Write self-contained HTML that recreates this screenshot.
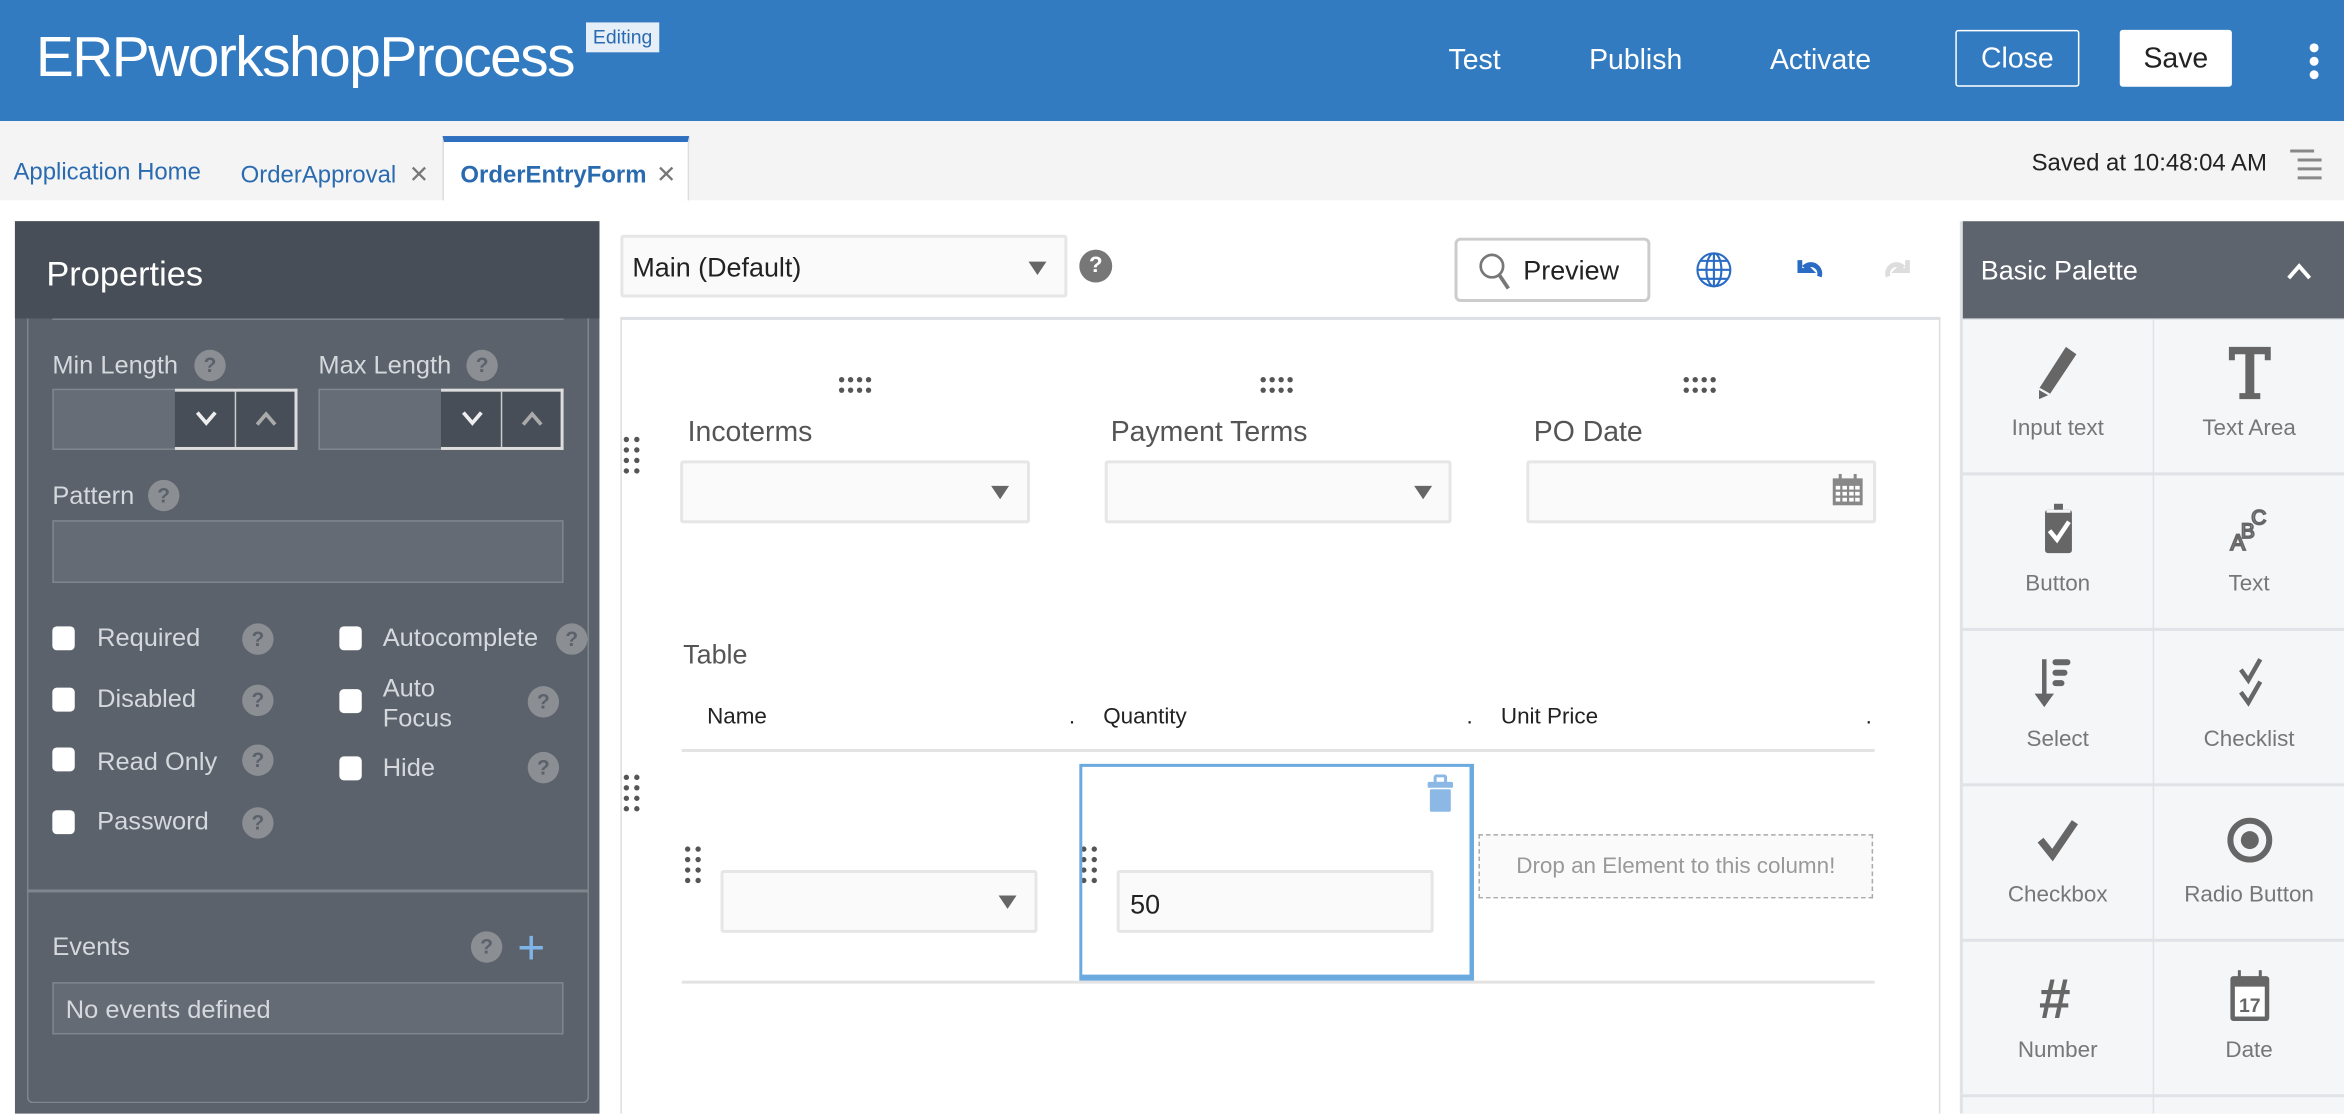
<!DOCTYPE html>
<html><head><meta charset="utf-8"><style>
*{box-sizing:border-box;margin:0;padding:0}
html,body{width:2344px;height:1114px;overflow:hidden;background:#fff;font-family:"Liberation Sans",sans-serif}
#root{position:absolute;left:0;top:0;width:1568px;height:745px;transform:scale(1.4949);transform-origin:0 0;overflow:hidden}
.a{position:absolute;white-space:nowrap}
.q{position:absolute;width:21px;height:21px;border-radius:50%;background:#8b8f94;color:#5b626b;font-size:14px;font-weight:bold;text-align:center;line-height:21px}
.cb{position:absolute;width:15px;height:16px;background:#fff;border-radius:3px}
.lbl{position:absolute;color:#d5d8dc;font-size:17px;white-space:nowrap}
.in{position:absolute;background:#fafafa;border:1px solid #e0e0e0;border-radius:2px}
.arr{position:absolute;width:0;height:0;border-left:6px solid transparent;border-right:6px solid transparent;border-top:9px solid #666}
.cell{position:absolute;width:127px;height:102px;background:#f5f6f8;text-align:center;color:#777;font-size:15px}
.cell span{position:absolute;left:0;right:0;top:64px}
.cell svg{position:absolute;left:46px;top:16px}
</style></head><body><div id="root">
<div class="a" style="left:0;top:0;width:1568px;height:81px;background:#337bc1"></div>
<div class="a" style="left:24px;top:18px;font-size:38px;color:#fff;letter-spacing:-1px">ERPworkshopProcess</div>
<div class="a" style="left:392px;top:15px;width:49px;height:20px;background:#e6eef8;color:#2a6bb0;font-size:13px;text-align:center;line-height:20px">Editing</div>
<div class="a" style="left:969px;top:30px;font-size:19px;color:#fff">Test</div>
<div class="a" style="left:1063px;top:30px;font-size:19px;color:#fff">Publish</div>
<div class="a" style="left:1184px;top:30px;font-size:19px;color:#fff">Activate</div>
<div class="a" style="left:1308px;top:20px;width:83px;height:38px;border:1.5px solid #fff;border-radius:2px;color:#fff;font-size:19px;text-align:center;line-height:37px">Close</div>
<div class="a" style="left:1418px;top:20px;width:75px;height:38px;background:#fff;border-radius:2px;color:#222;font-size:19px;text-align:center;line-height:39px">Save</div>
<div class="a" style="left:1545px;top:29px;width:6px;height:6px;border-radius:50%;background:#fff"></div>
<div class="a" style="left:1545px;top:38px;width:6px;height:6px;border-radius:50%;background:#fff"></div>
<div class="a" style="left:1545px;top:47px;width:6px;height:6px;border-radius:50%;background:#fff"></div>
<div class="a" style="left:0;top:81px;width:1568px;height:53px;background:#f4f4f4"></div>
<div class="a" style="left:296px;top:91px;width:165px;height:43px;background:#fff;border-top:4px solid #2f6fc0;border-left:1px solid #ddd;border-right:1px solid #ddd"></div>
<div class="a" style="left:9px;top:107px;font-size:16px;color:#2a6bb0">Application Home</div>
<div class="a" style="left:161px;top:107px;font-size:16px;color:#2a6bb0">OrderApproval <span style="color:#777;margin-left:4px">✕</span></div>
<div class="a" style="left:308px;top:107px;font-size:16px;color:#2a6bb0;font-weight:bold">OrderEntryForm <span style="color:#777;margin-left:2px;font-weight:normal">✕</span></div>
<div class="a" style="left:1359px;top:101px;font-size:16px;color:#222">Saved at 10:48:04 AM</div>
<svg class="a" style="left:1531px;top:99px" width="24" height="24"><g stroke="#888" stroke-width="2"><line x1="1" y1="2" x2="17" y2="2"/><line x1="6" y1="8" x2="22" y2="8"/><line x1="6" y1="14" x2="22" y2="14"/><line x1="6" y1="20" x2="22" y2="20"/></g></svg>
<div class="a" style="left:10px;top:148px;width:391px;height:597px;background:#5b626b"></div>
<div class="a" style="left:18px;top:200px;width:376px;height:538px;border:1px solid #80868e;border-top:none;border-radius:0 0 4px 4px"></div>
<div class="a" style="left:35px;top:196px;width:342px;height:18px;border:1px solid #80868e;background:#656b75"></div>
<div class="a" style="left:10px;top:148px;width:391px;height:65px;background:#474e57"></div>
<div class="a" style="left:31px;top:170px;font-size:23px;color:#fff">Properties</div>
<div class="lbl" style="left:35px;top:235px">Min Length</div><div class="q" style="left:130px;top:234px">?</div>
<div class="lbl" style="left:213px;top:235px">Max Length</div><div class="q" style="left:312px;top:234px">?</div>
<div class="a" style="left:35px;top:260px;width:164px;height:41px;border:1px solid #80868e;background:#676d76"></div>
<div class="a" style="left:117px;top:260px;width:82px;height:41px;background:#474e57;border:2px solid #ddd;border-left:none"></div>
<div class="a" style="left:157px;top:262px;width:1px;height:37px;background:#ccc"></div>
<div class="a" style="left:213px;top:260px;width:164px;height:41px;border:1px solid #80868e;background:#676d76"></div>
<div class="a" style="left:295px;top:260px;width:82px;height:41px;background:#474e57;border:2px solid #ddd;border-left:none"></div>
<div class="a" style="left:335px;top:262px;width:1px;height:37px;background:#ccc"></div>
<svg class="a" style="left:130px;top:274px" width="16" height="12"><polyline points="2,2 8,9 14,2" fill="none" stroke="#eee" stroke-width="2.5"/></svg>
<svg class="a" style="left:170px;top:274px" width="16" height="12"><polyline points="2,10 8,3 14,10" fill="none" stroke="#aaa" stroke-width="2.5"/></svg>
<svg class="a" style="left:308px;top:274px" width="16" height="12"><polyline points="2,2 8,9 14,2" fill="none" stroke="#eee" stroke-width="2.5"/></svg>
<svg class="a" style="left:348px;top:274px" width="16" height="12"><polyline points="2,10 8,3 14,10" fill="none" stroke="#aaa" stroke-width="2.5"/></svg>
<div class="lbl" style="left:35px;top:322px">Pattern</div><div class="q" style="left:99px;top:321px">?</div>
<div class="a" style="left:35px;top:348px;width:342px;height:42px;border:1px solid #80868e;background:#656b75"></div>
<div class="cb" style="left:35px;top:419px"></div><div class="lbl" style="left:65px;top:417px">Required</div><div class="q" style="left:162px;top:417px">?</div>
<div class="cb" style="left:35px;top:460px"></div><div class="lbl" style="left:65px;top:458px">Disabled</div><div class="q" style="left:162px;top:458px">?</div>
<div class="cb" style="left:35px;top:500px"></div><div class="lbl" style="left:65px;top:500px">Read Only</div><div class="q" style="left:162px;top:498px">?</div>
<div class="cb" style="left:35px;top:542px"></div><div class="lbl" style="left:65px;top:540px">Password</div><div class="q" style="left:162px;top:540px">?</div>
<div class="cb" style="left:227px;top:419px"></div><div class="lbl" style="left:256px;top:417px">Autocomplete</div><div class="q" style="left:372px;top:417px">?</div>
<div class="cb" style="left:227px;top:461px"></div><div class="lbl" style="left:256px;top:451px;line-height:20px">Auto<br>Focus</div><div class="q" style="left:353px;top:459px">?</div>
<div class="cb" style="left:227px;top:506px"></div><div class="lbl" style="left:256px;top:504px">Hide</div><div class="q" style="left:353px;top:503px">?</div>
<div class="a" style="left:18px;top:595px;width:376px;height:2px;background:#80868e"></div>
<div class="lbl" style="left:35px;top:624px">Events</div><div class="q" style="left:315px;top:623px">?</div>
<div class="a" style="left:346px;top:622px;font-size:32px;color:#7fb4e6;line-height:24px">+</div>
<div class="a" style="left:35px;top:657px;width:342px;height:35px;border:1px solid #80868e;background:#656b75;color:#d5d8dc;font-size:17px;line-height:35px;padding-left:8px">No events defined</div>
<div class="in" style="left:415px;top:157px;width:299px;height:42px;border-width:2px;border-color:#e6e6e6"></div>
<div class="a" style="left:423px;top:169px;font-size:18px;color:#222">Main (Default)</div>
<div class="arr" style="left:688px;top:175px"></div>
<div class="a" style="left:722px;top:167px;width:22px;height:22px;border-radius:50%;background:#777;color:#fff;font-size:15px;font-weight:bold;text-align:center;line-height:22px">?</div>
<div class="a" style="left:973px;top:159px;width:131px;height:43px;border:2px solid #ccc;border-radius:4px"></div>
<svg class="a" style="left:988px;top:168px" width="26" height="28"><circle cx="10" cy="10" r="7.5" fill="none" stroke="#777" stroke-width="1.8"/><line x1="15" y1="16" x2="21" y2="25" stroke="#777" stroke-width="2.5"/></svg>
<div class="a" style="left:1019px;top:171px;font-size:18px;color:#222">Preview</div>
<svg class="a" style="left:1134px;top:168px" width="25" height="25"><g fill="none" stroke="#2a6bc4" stroke-width="1.4"><circle cx="12.5" cy="12.5" r="11"/><ellipse cx="12.5" cy="12.5" rx="5" ry="11"/><line x1="12.5" y1="1.5" x2="12.5" y2="23.5"/><line x1="1.5" y1="12.5" x2="23.5" y2="12.5"/><path d="M3.5 6.5h18M3.5 18.5h18"/></g></svg>
<svg class="a" style="left:1199px;top:168px" width="24" height="24"><path d="M5 6v7h7l-3-3a6 6 0 0 1 9 7" fill="none" stroke="#2a6bc4" stroke-width="3.2"/></svg>
<svg class="a" style="left:1257px;top:168px" width="24" height="24"><path d="M19 6v7h-7l3-3a6 6 0 0 0-9 7" fill="none" stroke="#ddd" stroke-width="3.2"/></svg>
<div class="a" style="left:415px;top:212px;width:883px;height:533px;border:1px solid #ddd;border-top:2px solid #dcdfe3;border-bottom:none"></div>
<svg class="a" style="left:561px;top:252px" width="24" height="12"><g fill="#555"><circle cx="2" cy="2" r="1.8"/><circle cx="8" cy="2" r="1.8"/><circle cx="14" cy="2" r="1.8"/><circle cx="20" cy="2" r="1.8"/><circle cx="2" cy="9" r="1.8"/><circle cx="8" cy="9" r="1.8"/><circle cx="14" cy="9" r="1.8"/><circle cx="20" cy="9" r="1.8"/></g></svg>
<svg class="a" style="left:843px;top:252px" width="24" height="12"><g fill="#555"><circle cx="2" cy="2" r="1.8"/><circle cx="8" cy="2" r="1.8"/><circle cx="14" cy="2" r="1.8"/><circle cx="20" cy="2" r="1.8"/><circle cx="2" cy="9" r="1.8"/><circle cx="8" cy="9" r="1.8"/><circle cx="14" cy="9" r="1.8"/><circle cx="20" cy="9" r="1.8"/></g></svg>
<svg class="a" style="left:1126px;top:252px" width="24" height="12"><g fill="#555"><circle cx="2" cy="2" r="1.8"/><circle cx="8" cy="2" r="1.8"/><circle cx="14" cy="2" r="1.8"/><circle cx="20" cy="2" r="1.8"/><circle cx="2" cy="9" r="1.8"/><circle cx="8" cy="9" r="1.8"/><circle cx="14" cy="9" r="1.8"/><circle cx="20" cy="9" r="1.8"/></g></svg>
<svg class="a" style="left:417px;top:292px" width="12" height="26"><g fill="#555"><circle cx="2" cy="2" r="1.8"/><circle cx="9" cy="2" r="1.8"/><circle cx="2" cy="9" r="1.8"/><circle cx="9" cy="9" r="1.8"/><circle cx="2" cy="16" r="1.8"/><circle cx="9" cy="16" r="1.8"/><circle cx="2" cy="23" r="1.8"/><circle cx="9" cy="23" r="1.8"/></g></svg>
<svg class="a" style="left:417px;top:518px" width="12" height="26"><g fill="#555"><circle cx="2" cy="2" r="1.8"/><circle cx="9" cy="2" r="1.8"/><circle cx="2" cy="9" r="1.8"/><circle cx="9" cy="9" r="1.8"/><circle cx="2" cy="16" r="1.8"/><circle cx="9" cy="16" r="1.8"/><circle cx="2" cy="23" r="1.8"/><circle cx="9" cy="23" r="1.8"/></g></svg>
<svg class="a" style="left:458px;top:566px" width="12" height="26"><g fill="#555"><circle cx="2" cy="2" r="1.8"/><circle cx="9" cy="2" r="1.8"/><circle cx="2" cy="9" r="1.8"/><circle cx="9" cy="9" r="1.8"/><circle cx="2" cy="16" r="1.8"/><circle cx="9" cy="16" r="1.8"/><circle cx="2" cy="23" r="1.8"/><circle cx="9" cy="23" r="1.8"/></g></svg>
<svg class="a" style="left:723px;top:566px" width="12" height="26"><g fill="#555"><circle cx="2" cy="2" r="1.8"/><circle cx="9" cy="2" r="1.8"/><circle cx="2" cy="9" r="1.8"/><circle cx="9" cy="9" r="1.8"/><circle cx="2" cy="16" r="1.8"/><circle cx="9" cy="16" r="1.8"/><circle cx="2" cy="23" r="1.8"/><circle cx="9" cy="23" r="1.8"/></g></svg>
<div class="a" style="left:460px;top:279px;font-size:19px;color:#555">Incoterms</div>
<div class="a" style="left:743px;top:279px;font-size:19px;color:#555">Payment Terms</div>
<div class="a" style="left:1026px;top:279px;font-size:19px;color:#555">PO Date</div>
<div class="in" style="left:455px;top:308px;width:234px;height:42px;border-width:2px;border-color:#e6e6e6"></div><div class="arr" style="left:663px;top:325px"></div>
<div class="in" style="left:739px;top:308px;width:232px;height:42px;border-width:2px;border-color:#e6e6e6"></div><div class="arr" style="left:946px;top:325px"></div>
<div class="in" style="left:1021px;top:308px;width:234px;height:42px;border-width:2px;border-color:#e6e6e6"></div>
<svg class="a" style="left:1225px;top:317px" width="22" height="22"><rect x="1" y="3" width="20" height="18" fill="#888"/><rect x="5" y="0" width="2" height="5" fill="#888"/><rect x="15" y="0" width="2" height="5" fill="#888"/><g fill="#fff"><rect x="3" y="8" width="3" height="2.5"/><rect x="7.5" y="8" width="3" height="2.5"/><rect x="12" y="8" width="3" height="2.5"/><rect x="16" y="8" width="3" height="2.5"/><rect x="3" y="12" width="3" height="2.5"/><rect x="7.5" y="12" width="3" height="2.5"/><rect x="12" y="12" width="3" height="2.5"/><rect x="16" y="12" width="3" height="2.5"/><rect x="3" y="16" width="3" height="2.5"/><rect x="7.5" y="16" width="3" height="2.5"/><rect x="12" y="16" width="3" height="2.5"/><rect x="16" y="16" width="3" height="2.5"/></g></svg>
<div class="a" style="left:457px;top:428px;font-size:18px;color:#555">Table</div>
<div class="a" style="left:473px;top:471px;font-size:15px;color:#222">Name</div>
<div class="a" style="left:715px;top:471px;font-size:15px;color:#222">.</div>
<div class="a" style="left:738px;top:471px;font-size:15px;color:#222">Quantity</div>
<div class="a" style="left:981px;top:471px;font-size:15px;color:#222">.</div>
<div class="a" style="left:1004px;top:471px;font-size:15px;color:#222">Unit Price</div>
<div class="a" style="left:1248px;top:471px;font-size:15px;color:#222">.</div>
<div class="a" style="left:456px;top:501px;width:798px;height:2px;background:#e3e3e3"></div>
<div class="a" style="left:456px;top:656px;width:798px;height:2px;background:#e3e3e3"></div>
<div class="in" style="left:482px;top:582px;width:212px;height:42px;border-width:2px;border-color:#e6e6e6"></div><div class="arr" style="left:668px;top:599px"></div>
<div class="a" style="left:722px;top:511px;width:264px;height:145px;border:2px solid #6aaade;border-right-width:3px;border-bottom-width:4px;background:transparent"></div>
<svg class="a" style="left:954px;top:518px" width="20" height="26"><rect x="6" y="1" width="7" height="5" rx="1" fill="none" stroke="#8cb8e6" stroke-width="2"/><rect x="1" y="5" width="17" height="4" rx="1" fill="#8cb8e6"/><rect x="2.5" y="10" width="14" height="15" rx="1" fill="#8cb8e6"/></svg>
<div class="in" style="left:747px;top:582px;width:212px;height:42px;border-width:2px;border-color:#e6e6e6;color:#222;font-size:18px;line-height:42px;padding-left:7px">50</div>
<div class="a" style="left:989px;top:558px;width:264px;height:43px;border:1.5px dashed #aaa;background:#fafafa;color:#999;font-size:15px;text-align:center;line-height:42px">Drop an Element to this column!</div>
<div class="a" style="left:1311px;top:148px;width:257px;height:597px;background:#dfe2e6"></div>
<div class="a" style="left:1313px;top:148px;width:255px;height:65px;background:#5d646d"></div>
<div class="a" style="left:1325px;top:171px;font-size:18px;color:#fff">Basic Palette</div>
<svg class="a" style="left:1529px;top:175px" width="18" height="14"><polyline points="2,11 9,3 16,11" fill="none" stroke="#fff" stroke-width="2.6"/></svg>
<div class="cell" style="left:1313px;top:214px"><svg width="36" height="40"><path d="M23 2l7 5-18 27-7 3 0-7z" fill="#666"/><path d="M5 30l7 4" stroke="#f5f6f8" stroke-width="1.5"/></svg><span>Input text</span></div>
<div class="cell" style="left:1441px;top:214px"><svg width="36" height="40"><path d="M4 2h28v9h-4v-4h-7v26h4v4h-14v-4h4v-26h-7v4h-4z" fill="#666"/></svg><span>Text Area</span></div>
<div class="cell" style="left:1313px;top:318px"><svg width="36" height="40"><rect x="9" y="7" width="18" height="29" rx="2" fill="#666"/><rect x="15" y="3" width="6" height="5" fill="#666"/><rect x="10" y="7" width="16" height="2" fill="#f5f6f8"/><polyline points="12,21 17,27 25,15" fill="none" stroke="#fff" stroke-width="3"/></svg><span>Button</span></div>
<div class="cell" style="left:1441px;top:318px"><svg width="36" height="40"><g font-family="Liberation Sans"><text x="5" y="34" font-size="15" fill="#f5f6f8" stroke="#666" stroke-width="1.2">A</text><text x="12" y="26" font-size="14" fill="#f5f6f8" stroke="#666" stroke-width="1.2">B</text><text x="19" y="17" font-size="14" fill="#f5f6f8" stroke="#666" stroke-width="1.2">C</text></g></svg><span>Text</span></div>
<div class="cell" style="left:1313px;top:422px"><svg width="36" height="40"><rect x="7" y="3" width="3" height="25" fill="#666"/><polygon points="2,26 15,26 8.5,35" fill="#666"/><rect x="14" y="3" width="12" height="4" rx="2" fill="#666"/><rect x="14" y="10" width="10" height="4" rx="2" fill="#666"/><rect x="14" y="17" width="8" height="4" rx="2" fill="#666"/></svg><span>Select</span></div>
<div class="cell" style="left:1441px;top:422px"><svg width="36" height="40"><polyline points="12,10 17,17 25,3" fill="none" stroke="#666" stroke-width="3"/><polyline points="12,25 17,32 25,18" fill="none" stroke="#666" stroke-width="3"/></svg><span>Checklist</span></div>
<div class="cell" style="left:1313px;top:526px"><svg width="36" height="40"><polyline points="6,20 14,30 29,8" fill="none" stroke="#666" stroke-width="5"/></svg><span>Checkbox</span></div>
<div class="cell" style="left:1441px;top:526px"><svg width="36" height="40"><circle cx="18" cy="20" r="13" fill="none" stroke="#666" stroke-width="4"/><circle cx="18" cy="20" r="6" fill="#666"/></svg><span>Radio Button</span></div>
<div class="cell" style="left:1313px;top:630px"><svg width="36" height="40"><text x="5" y="35" font-family="Liberation Sans" font-weight="bold" font-size="38" fill="#666">#</text></svg><span>Number</span></div>
<div class="cell" style="left:1441px;top:630px"><svg width="36" height="40"><rect x="5" y="7" width="26" height="30" rx="2" fill="#666"/><rect x="8" y="14" width="20" height="20" fill="#fff"/><rect x="10" y="3" width="2" height="6" fill="#666"/><rect x="24" y="3" width="2" height="6" fill="#666"/><text x="18" y="31" text-anchor="middle" font-family="Liberation Sans" font-weight="bold" font-size="13" fill="#666">17</text></svg><span>Date</span></div>
<div class="cell" style="left:1313px;top:734px;height:11px"></div><div class="cell" style="left:1441px;top:734px;height:11px"></div>
</div></body></html>
